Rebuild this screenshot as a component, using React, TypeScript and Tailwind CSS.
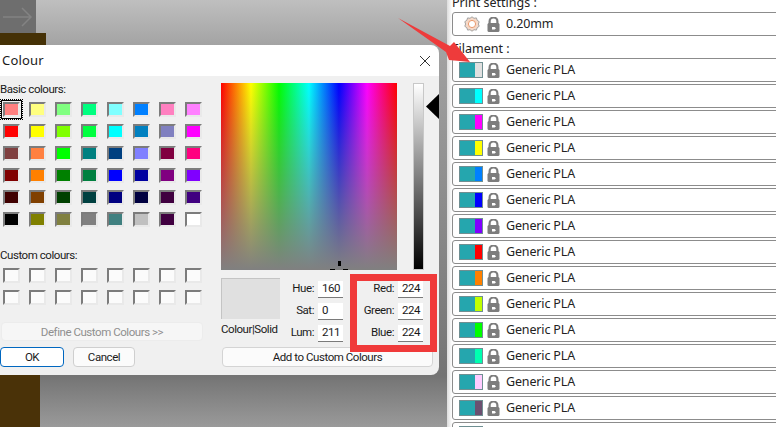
import React from 'react';

const basicColours = [
  'bg-[#ff8080]', 'bg-[#ffff80]', 'bg-[#80ff80]', 'bg-[#00ff80]', 'bg-[#80ffff]', 'bg-[#0080ff]', 'bg-[#ff80c0]', 'bg-[#ff80ff]',
  'bg-[#ff0000]', 'bg-[#ffff00]', 'bg-[#80ff00]', 'bg-[#00ff40]', 'bg-[#00ffff]', 'bg-[#0080c0]', 'bg-[#8080c0]', 'bg-[#ff00ff]',
  'bg-[#804040]', 'bg-[#ff8040]', 'bg-[#00ff00]', 'bg-[#008080]', 'bg-[#004080]', 'bg-[#8080ff]', 'bg-[#800040]', 'bg-[#ff0080]',
  'bg-[#800000]', 'bg-[#ff8000]', 'bg-[#008000]', 'bg-[#008040]', 'bg-[#0000ff]', 'bg-[#0000a0]', 'bg-[#800080]', 'bg-[#8000ff]',
  'bg-[#400000]', 'bg-[#804000]', 'bg-[#004000]', 'bg-[#004040]', 'bg-[#000080]', 'bg-[#000040]', 'bg-[#400040]', 'bg-[#400080]',
  'bg-[#000000]', 'bg-[#808000]', 'bg-[#808040]', 'bg-[#808080]', 'bg-[#408080]', 'bg-[#c0c0c0]', 'bg-[#400040]', 'bg-[#ffffff]',
];

const filamentColours = [
  'bg-[#e0e0e0]', 'bg-[#00ffff]', 'bg-[#ff00ff]', 'bg-[#ffff00]', 'bg-[#0080ff]',
  'bg-[#0000ff]', 'bg-[#8000ff]', 'bg-[#ff0000]', 'bg-[#ff8000]', 'bg-[#c0ff00]',
  'bg-[#00ff00]', 'bg-[#00ffb0]', 'bg-[#ffccff]', 'bg-[#6b5070]',
];

const Swatch = ({ colour }: { colour: string }) => (
  <div className={`w-[17px] h-[15px] border-2 border-t-[#7c7c7c] border-l-[#7c7c7c] border-r-[#e9e9e9] border-b-[#e9e9e9] ${colour}`} />
);

const LockIcon = () => (
  <svg width="13" height="15" viewBox="0 0 13 15" className="shrink-0">
    <path d="M2.6 8V4.4a3.9 3.9 0 0 1 7.8 0V8" fill="none" stroke="#7d7d7d" strokeWidth="2.2" />
    <rect x="0.5" y="6" width="12" height="9" rx="1.5" fill="#7d7d7d" />
    <path d="M5 10h2.6l1.4 1.2-1.4 1.3H5z" fill="#ffffff" />
  </svg>
);

const GearIcon = () => (
  <svg width="16" height="16" viewBox="0 0 16 16" className="shrink-0">
    <path
      d="M8 .8l2 1.5 2.4-.4.8 2.4 2 1.4-.8 2.3.8 2.3-2 1.4-.8 2.4-2.4-.4-2 1.5-2-1.5-2.4.4-.8-2.4-2-1.4.8-2.3-.8-2.3 2-1.4.8-2.4 2.4.4z"
      fill="#f6d9c8"
      stroke="#a3a3a3"
      strokeWidth="1"
    />
    <circle cx="8" cy="8" r="3.6" fill="#ffffff" stroke="#ea9a6e" strokeWidth="1" />
  </svg>
);

const ValueField = ({ label, value }: { label: string; value: string }) => (
  <div className="flex items-start h-[22px]">
    <span className="flex-1 text-right pr-[4px] leading-[14px]">{label}</span>
    <span className="w-[25px] h-[17px] bg-white border-b border-[#7a7a7a] pl-[4px] leading-[14px]">{value}</span>
  </div>
);

const DialogButton = ({ className, children }: { className: string; children: React.ReactNode }) => (
  <button className={`h-[20px] rounded-[4px] leading-[18px] ${className}`}>{children}</button>
);

const ColourDialog = () => (
  <div className="absolute left-0 top-[45px] w-[439px] h-[330px] flex flex-col rounded-r-lg overflow-hidden text-[11.5px] text-[#1a1a1a] font-['Roboto',sans-serif] tracking-[-0.45px]">
    <div className="h-[31px] shrink-0 bg-white flex items-center justify-between pt-[1px] pl-[2px] pr-[8px]">
      <span className="text-[13px] tracking-[0.2px] font-['Noto_Sans',sans-serif]">Colour</span>
      <svg width="12" height="12" viewBox="0 0 12 12">
        <path d="M1 1l10 10M11 1L1 11" stroke="#333333" strokeWidth="1" />
      </svg>
    </div>

    <div className="flex-1 bg-[#f0f0f0] flex">
      <div className="w-[221px] shrink-0 flex flex-col pl-[3px]">
        <div className="h-[26px] -ml-[3px] pt-[5px] leading-[17px]">Basic colours:</div>
        <div className="grid grid-cols-[repeat(8,17px)] gap-x-[9px] gap-y-[7px]">
          {basicColours.map((colour, i) => (
            <div key={i} className="relative">
              {i === 0 && <div className="absolute -left-[3px] -top-[3px] w-[23px] h-[21px] border border-dotted border-black outline outline-black -outline-offset-2" />}
              <Swatch colour={colour} />
            </div>
          ))}
        </div>
        <div className="h-[17px] -ml-[3px] mt-[20px] mb-[4px] leading-[17px]">Custom colours:</div>
        <div className="grid grid-cols-[repeat(8,17px)] gap-x-[9px] gap-y-[7px]">
          {Array.from({ length: 16 }).map((_, i) => (
            <Swatch key={i} colour="bg-[#fbfbfb]" />
          ))}
        </div>
        <button className="w-[202px] h-[19px] -ml-[2px] mt-[17px] bg-[#f6f6f6] border border-[#ececec] rounded-[4px] text-[#8f8f8f] leading-[16px]">
          Define Custom Colours &gt;&gt;
        </button>
        <div className="flex gap-[9px] mt-[6px] -ml-[3px]">
          <DialogButton className="w-[64px] bg-white border border-[#0067c0]">OK</DialogButton>
          <DialogButton className="w-[62px] bg-[#fbfbfb] border border-[#cfcfcf]">Cancel</DialogButton>
        </div>
      </div>

      <div className="flex-1 flex flex-col pt-[7px]">
        <div className="flex items-start h-[187px]">
          <div className="relative w-[176px] h-[187px] shrink-0 bg-[linear-gradient(to_bottom,rgba(128,128,128,0),#808080),linear-gradient(to_right,#ff0000,#ffff00_17%,#00ff00_33%,#00ffff_50%,#0000ff_67%,#ff00ff_83%,#ff0000)]">
            <span className="absolute left-[117px] top-[178px] w-[3px] h-[5px] bg-black" />
            <span className="absolute left-[109px] top-[186px] w-[5px] h-[1px] bg-black" />
            <span className="absolute left-[122px] top-[186px] w-[5px] h-[1px] bg-black" />
          </div>
          <div className="w-[11px] h-[187px] ml-[16px] border border-[#c8c8c8] bg-[linear-gradient(to_bottom,#ffffff,#000000)]" />
          <svg width="14" height="27" viewBox="0 0 14 27" className="ml-[2px] mt-[10px]">
            <path d="M14 0v27L0 13.5z" fill="#000000" />
          </svg>
        </div>

        <div className="flex h-[69px] mt-[8px]">
          <div className="w-[59px] shrink-0">
            <div className="h-[41px] bg-[#e0e0e0] border-t border-l border-[#c4c4c4]" />
            <div className="h-[18px] mt-[1px] -mr-[6px] leading-[18px] whitespace-nowrap">Colour|Solid</div>
          </div>
          <div className="w-[63px] shrink-0 mt-[3px]">
            <ValueField label="Hue:" value="160" />
            <ValueField label="Sat:" value="0" />
            <ValueField label="Lum:" value="211" />
          </div>
          <div className="relative z-10 w-[87px] h-[78px] -mt-[4px] ml-[7px] shrink-0 border-[7px] border-[#f03a3a] pr-[7px]">
            <ValueField label="Red:" value="224" />
            <ValueField label="Green:" value="224" />
            <ValueField label="Blue:" value="224" />
          </div>
        </div>

        <DialogButton className="w-[211px] ml-[1px] bg-[#fbfbfb] border border-[#d4d4d4]">Add to Custom Colours</DialogButton>
      </div>
    </div>
  </div>
);

const ProfileRow = ({ icon, swatch, label }: { icon?: React.ReactNode; swatch?: string; label?: string }) => (
  <div className="w-[340px] h-[24px] shrink-0 flex items-center border border-[#8c8c8c] rounded-l-[3px] pl-[6px]">
    {swatch ? (
      <div className="w-[24px] h-[16px] shrink-0 flex border border-[#6f8f92]">
        <div className="w-[15px] bg-[#25a6ae]" />
        <div className={`flex-1 ${swatch}`} />
      </div>
    ) : (
      <div className="w-[24px] shrink-0 flex justify-center pl-[1px]">{icon}</div>
    )}
    <div className="ml-[4px]"><LockIcon /></div>
    {label && <span className="ml-[6px] text-[12.5px] tracking-[-0.15px] text-[#222222] whitespace-nowrap">{label}</span>}
  </div>
);

const SettingsPanel = () => (
  <div className="w-[329px] h-[427px] shrink-0 bg-[linear-gradient(to_right,#dcdcdc,#ffffff_5px)] pl-[5px] overflow-hidden flex flex-col text-[12.5px] text-[#222222] font-['Noto_Sans',sans-serif]">
    <div className="h-[12px] shrink-0 leading-[12px] -mt-[3px] mb-[3px]">Print settings :</div>
    <ProfileRow icon={<GearIcon />} label="0.20mm" />
    <div className="h-[22px] shrink-0 leading-[26px]">Filament :</div>
    <div className="flex flex-col gap-[2px]">
      {filamentColours.map((colour, i) => (
        <ProfileRow key={i} swatch={colour} label="Generic PLA" />
      ))}
      <ProfileRow swatch="bg-[#808080]" />
    </div>
  </div>
);

const App: React.FC = () => {
  return (
    <div className="relative w-[776px] h-[427px] overflow-hidden flex bg-white">
      <div className="relative flex-1 bg-[linear-gradient(to_bottom,#bfbfbf,#a2a2a2_11%,#747474_88%,#9a9a9a)]">
        {/* scene behind the dialog */}
        <div className="w-[36px] h-[33px] bg-[#6e6e6e] flex items-center justify-center">
          <svg width="30" height="22" viewBox="0 0 30 22">
            <path d="M0 11h28M19 2l9 9-9 9" fill="none" stroke="#838383" strokeWidth="1.5" />
          </svg>
        </div>
        <div className="w-[46px] h-[12px] bg-[#453106]" />
        <div className="absolute left-0 top-[375px] w-[40px] h-[52px] bg-[#4a3208]" />
        <ColourDialog />
      </div>
      <SettingsPanel />
      {/* annotation arrow */}
      <svg width="776" height="427" viewBox="0 0 776 427" className="absolute left-0 top-0 pointer-events-none">
        <path d="M398 18L450 46 454 42 470 62 449 60 446 52z" fill="#ee3b3b" />
      </svg>
    </div>
  );
};

export default App;
